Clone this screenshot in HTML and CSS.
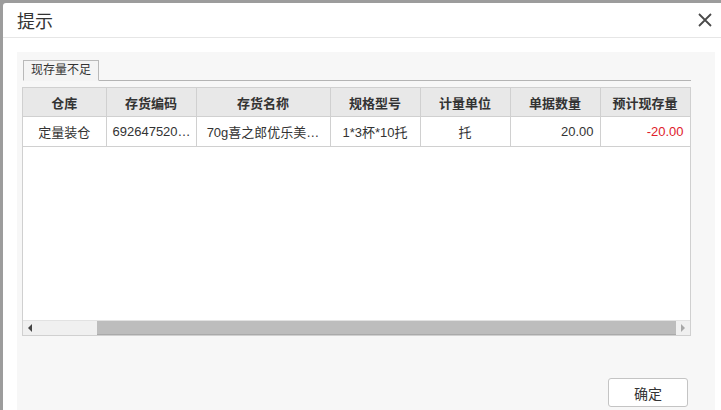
FILE: index.html
```html
<!DOCTYPE html>
<html lang="zh-CN">
<head>
    <meta charset="UTF-8">
    <title>提示</title>
    <link rel="stylesheet" href="styles.css">
</head>
<body>
    <div class="dialog">
        <div class="dialog-header">
            <span class="dialog-title">提示</span>
            <svg class="close-icon" width="14" height="14" viewBox="0 0 14 14">
                <path d="M1 1 L13 13 M13 1 L1 13" stroke="#4a4a4a" stroke-width="1.8" fill="none"/>
            </svg>
        </div>

        <div class="dialog-body">
            <!-- Tabs -->
            <div class="tab-strip">
                <div class="tab">现存量不足</div>
            </div>

            <!-- Grid -->
            <div class="grid">
                <table>
                    <colgroup>
                        <col style="width: 83px">
                        <col style="width: 90px">
                        <col style="width: 134px">
                        <col style="width: 90px">
                        <col style="width: 90px">
                        <col style="width: 90px">
                        <col style="width: 90px">
                    </colgroup>
                    <thead>
                        <tr>
                            <th>仓库</th>
                            <th>存货编码</th>
                            <th>存货名称</th>
                            <th>规格型号</th>
                            <th>计量单位</th>
                            <th>单据数量</th>
                            <th>预计现存量</th>
                        </tr>
                    </thead>
                    <tbody>
                        <tr>
                            <td class="center">定量装仓</td>
                            <td class="center">692647520…</td>
                            <td class="center">70g喜之郎优乐美…</td>
                            <td class="center">1*3杯*10托</td>
                            <td class="center">托</td>
                            <td class="num">20.00</td>
                            <td class="num negative">-20.00</td>
                        </tr>
                    </tbody>
                </table>

                <div class="grid-empty"></div>

                <div class="hscroll">
                    <span class="arrow arrow-left"></span>
                    <span class="track-start"></span>
                    <span class="thumb"></span>
                    <span class="arrow arrow-right"></span>
                </div>
            </div>

            <div class="dialog-footer">
                <button type="button" class="btn">确定</button>
            </div>
        </div>
    </div>
</body>
</html>
```

FILE: styles.css
```css
/* Colors */
:root {
    --text-color: #333;
    --border-color: #d0d0d0;
    --panel-bg: #f7f7f7;
    --header-bg: #e8e8e8;
}

body {
    margin: 0;
    height: 410px;
    overflow: hidden;
    background: #9c9c9c;
    font-family: "Liberation Sans", "Noto Sans CJK SC", sans-serif;
    color: var(--text-color);
}

.dialog {
    margin: 3px 0 0 3px;
    height: 407px;
    background: #fff;
    border-top-left-radius: 3px;
    display: flex;
    flex-direction: column;
}

.dialog-header {
    height: 34px;
    border-bottom: 1px solid #e6e6e6;
    display: flex;
    justify-content: space-between;
    align-items: center;
    padding: 0 9px 0 14px;
}
.dialog-title {
    font-size: 18px;
    color: #333;
}

.dialog-body {
    flex: 1;
    margin: 14px 6px 0 14px;
    padding: 8px 24px 0 6px;
    background: var(--panel-bg);
}

/* Tab */
.tab-strip {
    border-bottom: 1px solid #b4b4b4;
    display: flex;
}
.tab {
    height: 19px;
    padding: 0 7px;
    line-height: 19px;
    font-size: 12px;
    border: 1px solid #b9b9b9;
    background: #f4f4f4;
    margin-bottom: -1px;
    border-bottom: 1px solid #f4f4f4;
}

/* Grid */
.grid {
    margin-top: 6px;
    margin-left: -1px;
    height: 247px;
    border: 1px solid var(--border-color);
    background: #fff;
    display: flex;
    flex-direction: column;
}
.grid table {
    border-collapse: collapse;
    table-layout: fixed;
    width: 667px;
    font-size: 13px;
}
.grid th {
    height: 28px;
    background: var(--header-bg);
    font-weight: bold;
    border-right: 1px solid var(--border-color);
    border-bottom: 1px solid var(--border-color);
    padding: 0;
    white-space: nowrap;
}
.grid td {
    height: 29px;
    border-right: 1px solid var(--border-color);
    border-bottom: 1px solid var(--border-color);
    padding: 0 6px;
    white-space: nowrap;
    overflow: hidden;
}
.center {
    text-align: center;
}
.num {
    text-align: right;
}
.negative {
    color: #e0202a;
}
.grid-empty {
    flex: 1;
}

/* Horizontal scrollbar */
.hscroll {
    height: 14px;
    display: flex;
    align-items: stretch;
    background: #f0f0f0;
    border-top: 1px solid #e2e2e2;
}
.arrow {
    width: 14px;
    display: flex;
    align-items: center;
    justify-content: center;
}
.arrow-left::before {
    content: "";
    border-top: 4px solid transparent;
    border-bottom: 4px solid transparent;
    border-right: 4px solid #444;
}
.arrow-right::before {
    content: "";
    border-top: 4px solid transparent;
    border-bottom: 4px solid transparent;
    border-left: 4px solid #a8a8a8;
}
.track-start {
    width: 60px;
}
.thumb {
    flex: 1;
    background: #bdbdbd;
    border-bottom: 1px solid #aaa;
}

/* Footer */
.dialog-footer {
    display: flex;
    justify-content: flex-end;
    margin-top: 42px;
    margin-right: 3px;
}
.btn {
    width: 80px;
    height: 29px;
    background: #fff;
    border: 1px solid #c4c4c4;
    border-radius: 3px;
    font-family: "Liberation Sans", "Noto Sans CJK SC", sans-serif;
    font-size: 14px;
    color: #333;
    cursor: pointer;
}
```
